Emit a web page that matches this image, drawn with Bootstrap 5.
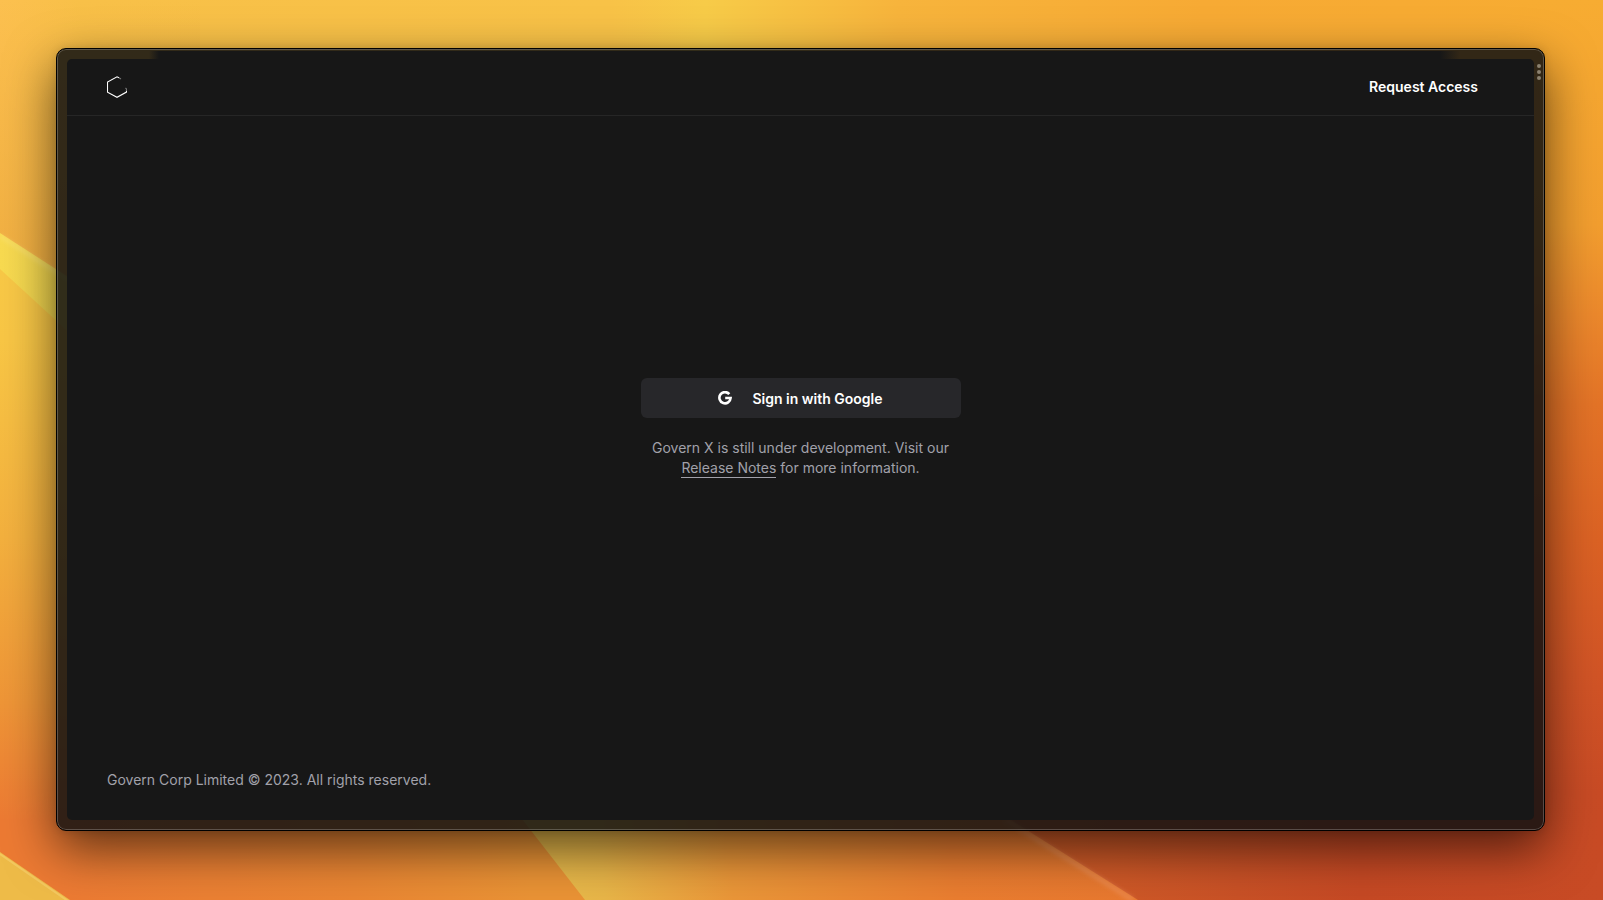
<!DOCTYPE html>
<html lang="en">
<head>
<meta charset="utf-8">
<meta name="viewport" content="width=device-width, initial-scale=1">
<title>Govern X</title>
<link href="https://cdn.jsdelivr.net/npm/bootstrap@5.3.0/dist/css/bootstrap.min.css" rel="stylesheet">
<style>
  body { font-family: Inter, "Liberation Sans", sans-serif; font-size: 14px; line-height: 20px; background: #f5a93a; color: #a1a1aa; }
  .desktop { padding: 48px 58px 69px 56px; isolation: isolate; }
  .wallpaper { z-index: -1; }
  .browser {
    border: 1px solid #000; border-radius: 10px; padding: 9px;
    background: rgba(18, 18, 18, .86);
    box-shadow: inset 0 0 0 1px rgba(255, 255, 255, .22), 0 18px 50px rgba(0, 0, 0, .6), 0 0 8px rgba(0, 0, 0, .12);
  }
  .titlebar { top: 2px; left: 92px; right: 84px; height: 10px; background: linear-gradient(90deg, transparent, #171717 10px, #171717 calc(100% - 20px), transparent); }
  .grip { top: 14px; right: 3px; }
  .page { background: #171717; border-radius: 5px; margin: 1px; }
  .topbar { height: 57px; padding: 0 40px; border-bottom: 1px solid #262626; }
  .topbar a { font-weight: 600; color: #fff; }
  .access { margin-right: 16px; }
  .center-area { padding-bottom: 30px; }
  .signin { width: 320px; }
  .btn-google { --bs-btn-color: #fff; --bs-btn-bg: #27272a; --bs-btn-hover-color: #fff; --bs-btn-hover-bg: #3f3f46; --bs-btn-border-color: transparent; height: 40px; font-size: 14px; font-weight: 600; border-radius: 6px; gap: 20px; margin-bottom: 20px; }
  .notes { color: inherit; border-bottom: 1px solid #a1a1aa; padding-bottom: 1px; }
  .legal { padding: 0 40px 30px; }
</style>
</head>
<body>
<div class="desktop position-relative d-flex vh-100">
  <svg class="wallpaper position-absolute top-0 start-0 w-100 h-100" viewBox="0 0 1603 900" preserveAspectRatio="none" aria-hidden="true">
    <defs>
      <linearGradient id="sky" x1="0" x2="1" y1="0" y2="0"><stop offset="0" stop-color="#fcc04f"/><stop offset=".05" stop-color="#f8c048"/><stop offset=".38" stop-color="#f8c247"/><stop offset=".44" stop-color="#f7cb48"/><stop offset=".56" stop-color="#f7b43c"/><stop offset=".75" stop-color="#f7aa34"/><stop offset="1" stop-color="#f7ac32"/></linearGradient>
      <linearGradient id="dusk" x1="0" x2="0" y1="0" y2="1"><stop offset="0" stop-color="#efac40" stop-opacity="0"/><stop offset="1" stop-color="#efac40"/></linearGradient>
      <linearGradient id="left" x1="0" x2="0" y1="0" y2="1"><stop offset="0" stop-color="#f8c947"/><stop offset=".15" stop-color="#f8c645"/><stop offset=".45" stop-color="#f3b03e"/><stop offset=".7" stop-color="#ee9537"/><stop offset=".88" stop-color="#ec7a33"/><stop offset="1" stop-color="#ec7a33"/></linearGradient>
      <linearGradient id="ray" x1="0" x2="1" y1="0" y2="0"><stop offset="0" stop-color="#f8da50"/><stop offset="1" stop-color="#ead04c"/></linearGradient>
      <linearGradient id="right" x1="0" x2="0" y1="0" y2="1"><stop offset="0" stop-color="#f7ac32"/><stop offset=".25" stop-color="#f29e2f"/><stop offset=".35" stop-color="#eb882c"/><stop offset=".45" stop-color="#e37327"/><stop offset=".6" stop-color="#db6224"/><stop offset=".75" stop-color="#d15426"/><stop offset=".88" stop-color="#c84b25"/><stop offset="1" stop-color="#c64a24"/></linearGradient>
      <linearGradient id="floor" x1="0" x2="1" y1="0" y2="0"><stop offset="0" stop-color="#ec7a33"/><stop offset=".5" stop-color="#ea8633"/><stop offset=".8" stop-color="#ea9335"/><stop offset="1" stop-color="#ea9335"/></linearGradient>
      <linearGradient id="beam" gradientUnits="userSpaceOnUse" x1="565" x2="1120" y1="890" y2="840"><stop offset="0" stop-color="#e8b94a"/><stop offset=".07" stop-color="#e8b548"/><stop offset=".3" stop-color="#ea9638"/><stop offset=".7" stop-color="#ea7d30"/><stop offset="1" stop-color="#e8782f"/></linearGradient>
      <linearGradient id="ember" x1="0" x2="1" y1="0" y2="0"><stop offset="0" stop-color="#d46028"/><stop offset=".4" stop-color="#c95126"/><stop offset=".6" stop-color="#c64924"/><stop offset="1" stop-color="#c84b25"/></linearGradient>
      <filter id="soft"><feGaussianBlur stdDeviation="2"/></filter>
    </defs>
    <rect width="1603" height="900" fill="url(#sky)"/>
    <rect width="200" height="300" fill="url(#dusk)"/>
    <path d="M0 240 400 500V900H0Z" fill="url(#left)"/>
    <path d="M0 233 110 304V370L0 269Z" fill="url(#ray)"/>
    <path d="M0 236 110 307" fill="none" stroke="#ffeda0" stroke-opacity=".5" stroke-width="2" filter="url(#soft)"/>
    <path d="M1520 0H1603V900H1520Z" fill="url(#right)"/>
    <path d="M60 810H650V900H60Z" fill="url(#floor)"/>
    <path d="M515 810 585 900H1170L1010 810Z" fill="url(#beam)"/>
    <path d="M995 810 1138 900H1603V810Z" fill="url(#ember)"/>
    <path d="M1006 820 1133 900" fill="none" stroke="#f49b6a" stroke-opacity=".5" stroke-width="4" filter="url(#soft)"/>
    <path d="M0 852 70 900H0Z" fill="#eebb48"/>
    <path d="M0 854 68 901" fill="none" stroke="#f6d070" stroke-opacity=".6" stroke-width="2"/>
  </svg>
  <div class="browser position-relative d-flex flex-fill">
    <div class="titlebar position-absolute"></div>
    <svg class="grip position-absolute" width="4" height="17" viewBox="0 0 4 17" fill="#8b8170" aria-hidden="true"><circle cx="2" cy="3" r="2"/><circle cx="2" cy="9" r="2"/><circle cx="2" cy="15" r="2"/></svg>
    <div class="page position-relative d-flex flex-column flex-fill">
      <header class="topbar d-flex align-items-center justify-content-between">
        <a href="#" class="d-flex" aria-label="Govern X home">
          <svg width="20" height="22" viewBox="0 0 20 22" fill="none" stroke-width="1.1">
            <path d="M12 1.800 10 .8.500 6v10.200L10 21.300 19.500 16.100V14.500" stroke="#fff"/><path d="M12 1.800 14 2.900M19.500 14.500V13L18.500 12" stroke="#777"/>
          </svg>
        </a>
        <a href="#" class="access text-decoration-none">Request Access</a>
      </header>
      <main class="center-area flex-fill d-flex justify-content-center align-items-center">
        <div class="signin text-center">
          <button type="button" class="btn btn-google w-100 d-flex align-items-center justify-content-center">
            <svg width="14" height="14" viewBox="0 0 14 14" fill="none" stroke="#fff" stroke-width="2.600" aria-hidden="true"><path d="M11.300 3.100A5.600 5.600 0 1 0 12.600 7H7.200" /></svg>
            Sign in with Google
          </button>
          <p class="mb-0">Govern X is still under development. Visit our <a href="#" class="notes text-decoration-none">Release Notes</a> for more information.</p>
        </div>
      </main>
      <footer class="legal">Govern Corp Limited © 2023. All rights reserved.</footer>
    </div>
  </div>
</div>
<script src="https://cdn.jsdelivr.net/npm/bootstrap@5.3.0/dist/js/bootstrap.bundle.min.js"></script>
</body>
</html>
